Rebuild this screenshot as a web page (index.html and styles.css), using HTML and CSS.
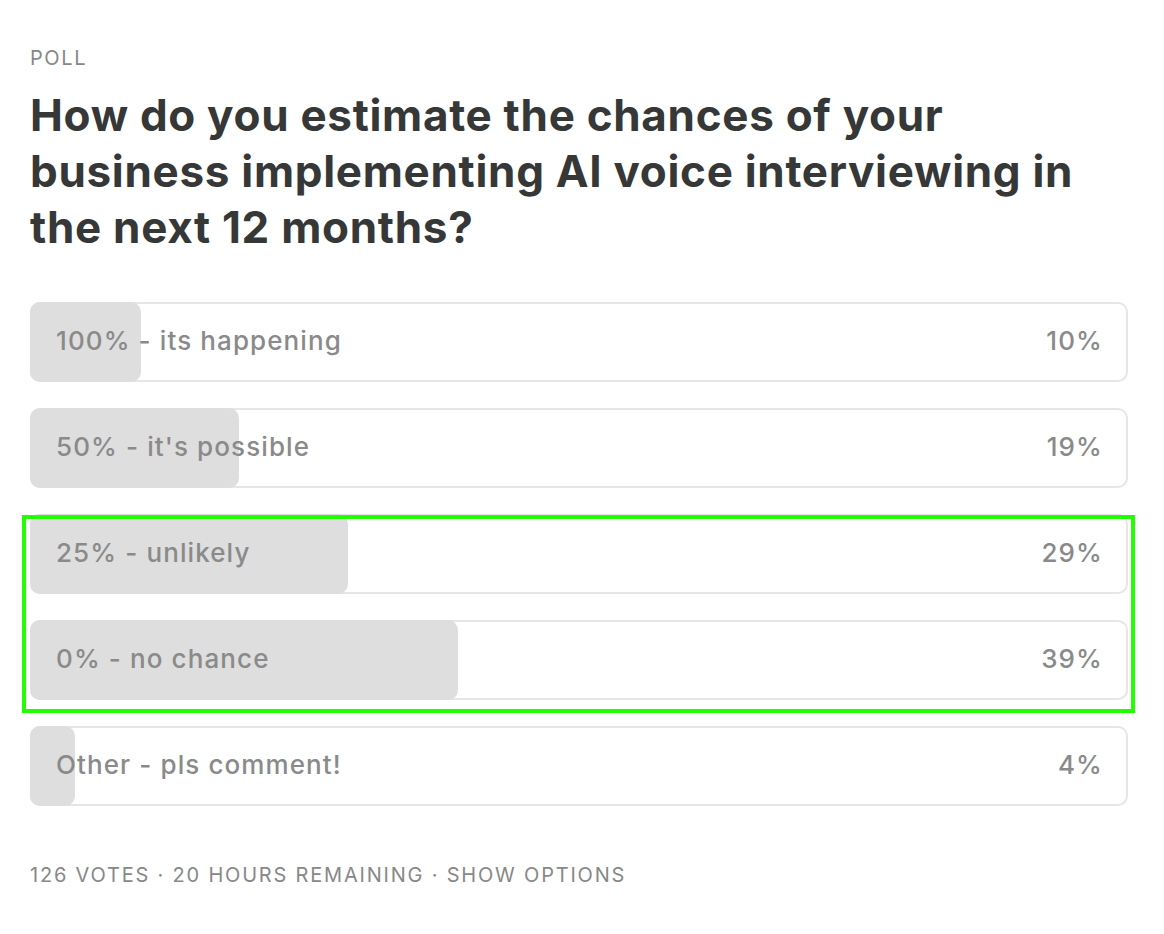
FILE: index.html
```html
<!DOCTYPE html>
<html>
<head>
<meta charset="utf-8">
<link rel="stylesheet" href="styles.css">
</head>
<body>
<div class="poll">
  <div class="poll-label">POLL</div>
  <h1 class="poll-title">How do you estimate the chances of your business implementing AI voice interviewing in the next 12 months?</h1>
  <div class="options">
    <div class="option"><div class="fill" style="width:10.1%"></div><span class="opt-text">100% - its happening</span><span class="opt-pct">10%</span></div>
    <div class="option"><div class="fill" style="width:19%"></div><span class="opt-text">50% - it's possible</span><span class="opt-pct">19%</span></div>
    <div class="option"><div class="fill" style="width:29%"></div><span class="opt-text">25% - unlikely</span><span class="opt-pct">29%</span></div>
    <div class="option"><div class="fill" style="width:39%"></div><span class="opt-text">0% - no chance</span><span class="opt-pct">39%</span></div>
    <div class="option"><div class="fill" style="width:4.1%"></div><span class="opt-text">Other - pls comment!</span><span class="opt-pct">4%</span></div>
    <div class="highlight"></div>
  </div>
  <div class="poll-footer">126 VOTES · 20 HOURS REMAINING · SHOW OPTIONS</div>
</div>
</body>
</html>
```

FILE: styles.css
```css
html, body {
  margin: 0;
  padding: 0;
  background: #ffffff;
}
body {
  font-family: Inter, "Noto Sans", "Liberation Sans", sans-serif;
}
.poll {
  padding: 46px 36px 40px 30px;
}
.poll-label {
  font-size: 20px;
  line-height: 24px;
  color: #888888;
  letter-spacing: 1.6px;
  font-weight: 400;
}
.poll-title {
  margin: 17px 0 0 0;
  max-width: 1080px;
  font-size: 44px;
  line-height: 56px;
  font-weight: 700;
  color: #363737;
  letter-spacing: 0.7px;
}
.options {
  position: relative;
  margin-top: 47px;
  display: flex;
  flex-direction: column;
  gap: 26px;
}
.option {
  position: relative;
  box-sizing: border-box;
  height: 80px;
  border-radius: 10px;
  box-shadow: inset 0 0 0 2px #e6e6e6;
  display: flex;
  align-items: center;
  justify-content: space-between;
  padding: 0 26px 4px 26px;
  font-size: 26px;
  font-weight: 500;
  color: #8a8a8a;
  letter-spacing: 1.1px;
}
.fill {
  position: absolute;
  left: 0;
  top: 0;
  bottom: 0;
  background: #dedede;
  border-radius: 10px;
}
.opt-text, .opt-pct {
  position: relative;
}
.opt-pct {
  margin-right: -1px;
}
.highlight {
  position: absolute;
  left: -8px;
  top: 213px;
  width: 1105px;
  height: 190px;
  border: 4px solid #22ff00;
  pointer-events: none;
}
.poll-footer {
  margin-top: 57px;
  font-size: 20px;
  line-height: 24px;
  color: #888888;
  letter-spacing: 1.8px;
}
```
